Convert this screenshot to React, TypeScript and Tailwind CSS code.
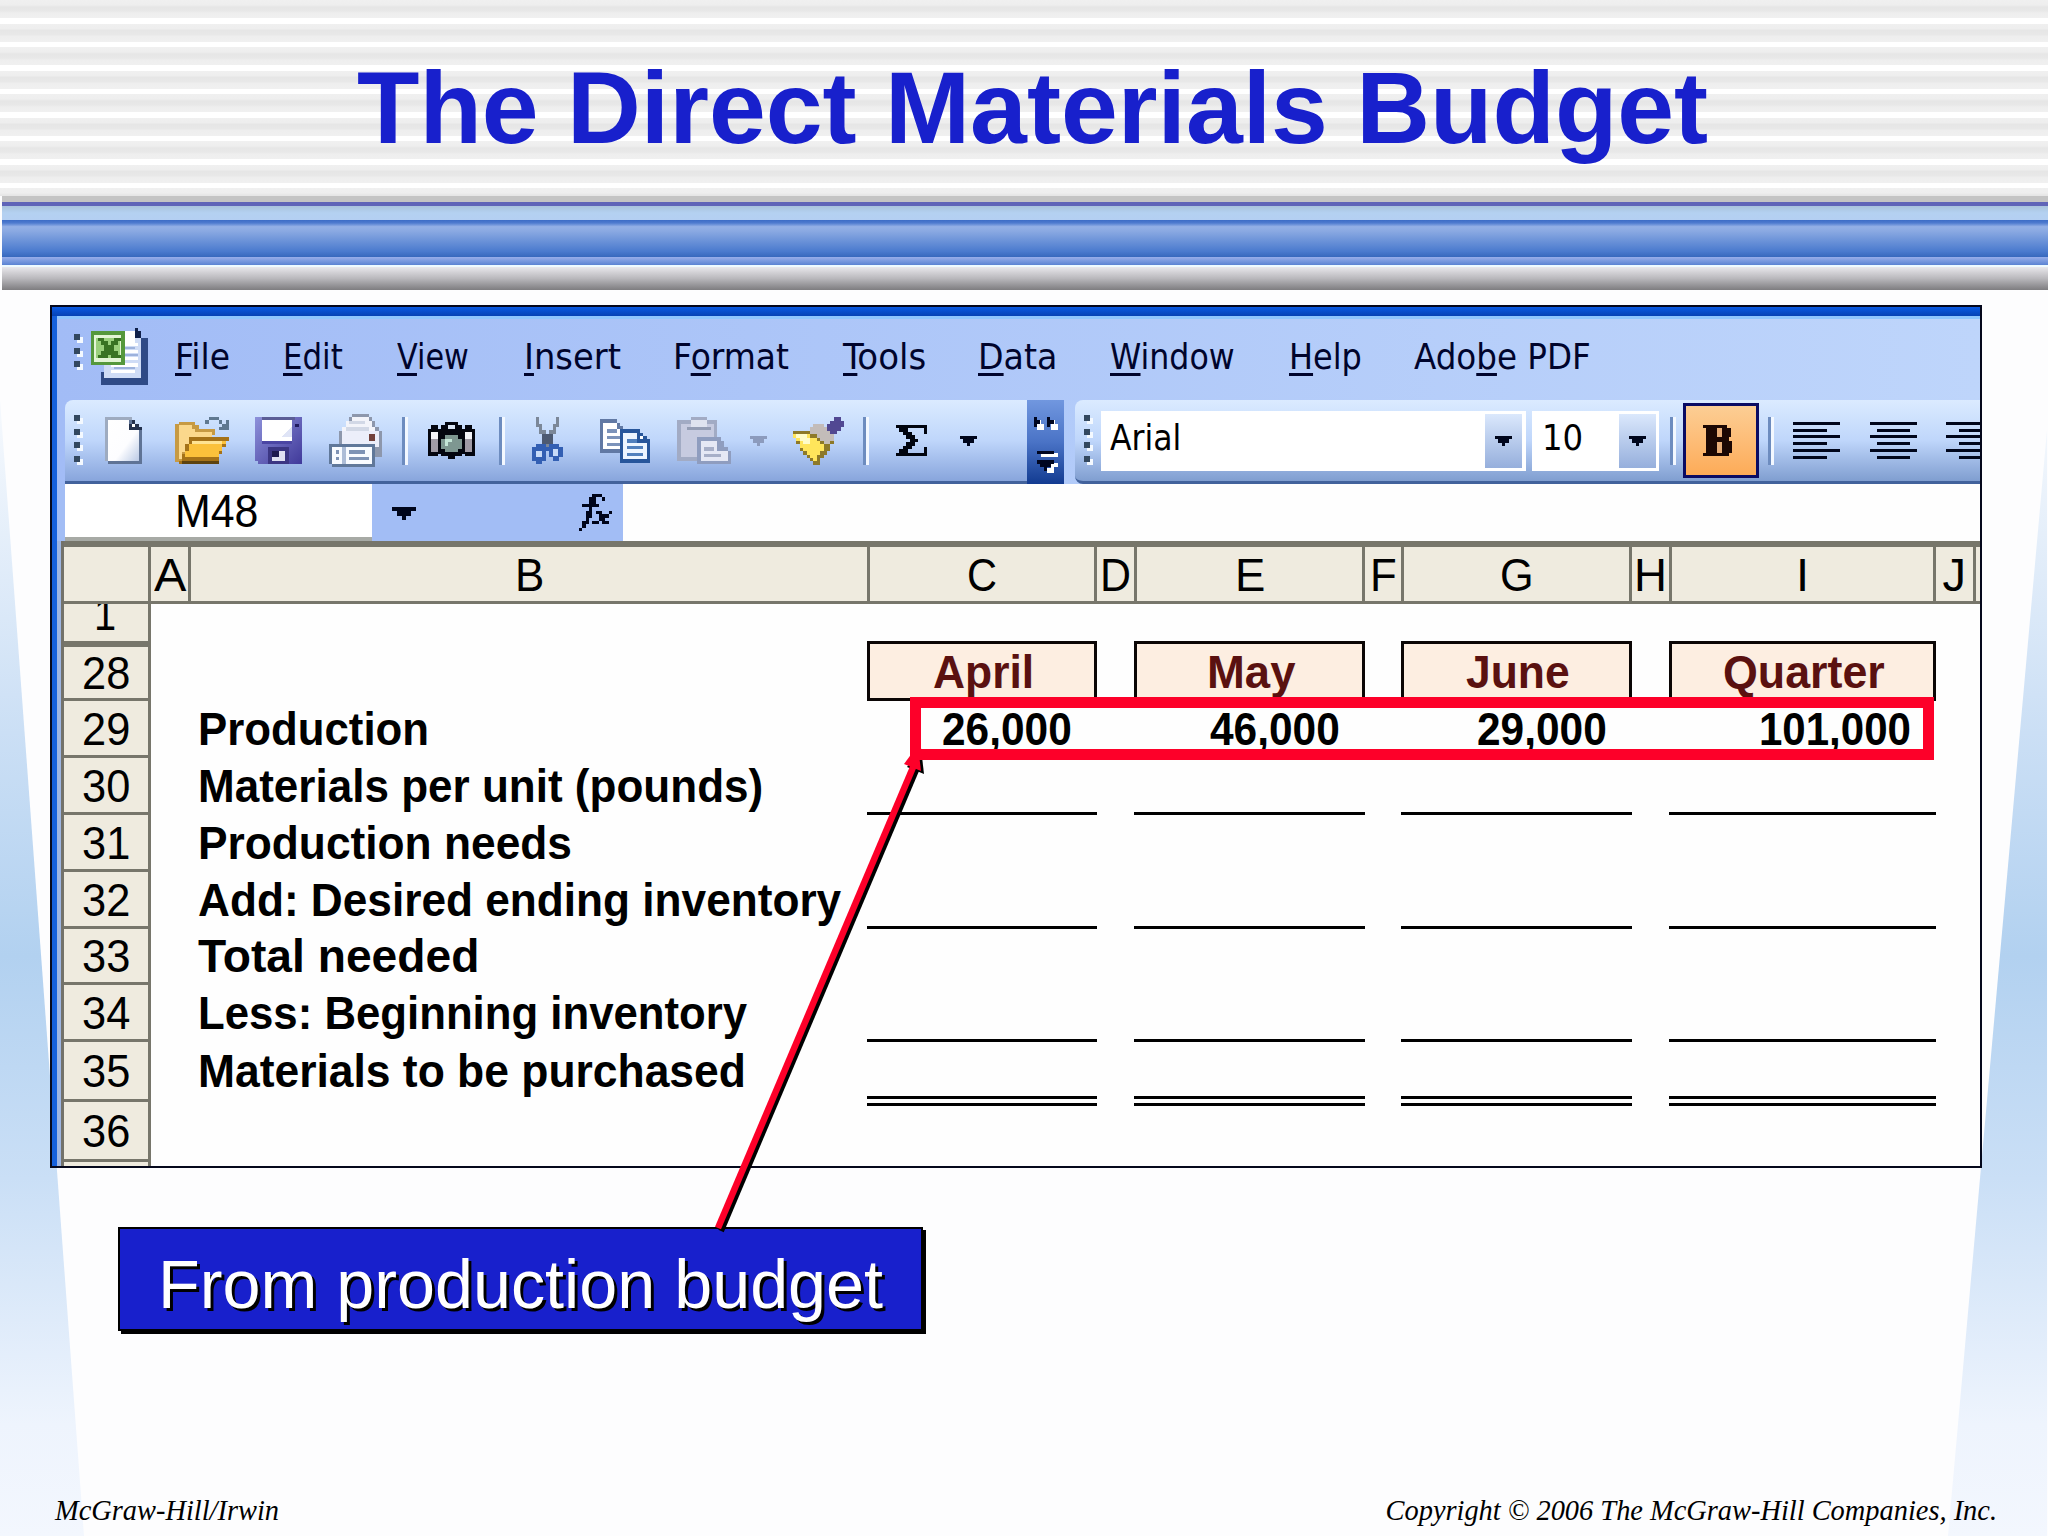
import { useLayoutEffect, useRef, useState } from 'react';
import type { ReactNode } from 'react';

interface FitTextProps {
    width: number;
    className?: string;
    children: ReactNode;
}

// Squeezes or stretches a line of text so that it fills exactly `width` pixels
function FitText({ width, className = '', children }: FitTextProps) {
    const ref = useRef<HTMLSpanElement>(null);
    const [scale, setScale] = useState(1);

    useLayoutEffect(() => {
        if (ref.current) setScale(width / ref.current.offsetWidth);
    }, [width]);

    return (
        <span className={`block shrink-0 whitespace-nowrap ${className}`} style={{ width }}>
            <span ref={ref} className="inline-block origin-left" style={{ transform: `scaleX(${scale})` }}>
                {children}
            </span>
        </span>
    );
}

interface MenuItem {
    before: string;
    key: string;
    after: string;
    width: number;
    gap: string;
}

const menu: MenuItem[] = [
    { before: '', key: 'F', after: 'ile', width: 55, gap: 'ml-[27px]' },
    { before: '', key: 'E', after: 'dit', width: 60, gap: 'ml-[53px]' },
    { before: '', key: 'V', after: 'iew', width: 72, gap: 'ml-[54px]' },
    { before: '', key: 'I', after: 'nsert', width: 97, gap: 'ml-[55px]' },
    { before: 'F', key: 'o', after: 'rmat', width: 116, gap: 'ml-[52px]' },
    { before: '', key: 'T', after: 'ools', width: 83, gap: 'ml-[54px]' },
    { before: '', key: 'D', after: 'ata', width: 79, gap: 'ml-[52px]' },
    { before: '', key: 'W', after: 'indow', width: 125, gap: 'ml-[53px]' },
    { before: '', key: 'H', after: 'elp', width: 73, gap: 'ml-[54px]' },
    { before: 'Ado', key: 'b', after: 'e PDF', width: 177, gap: 'ml-[52px]' },
];

const columns = [
    { name: 'A', size: 'w-[40px]', width: 32 },
    { name: 'B', size: 'w-[679px]', width: 29 },
    { name: 'C', size: 'w-[227px]', width: 30 },
    { name: 'D', size: 'w-[40px]', width: 31 },
    { name: 'E', size: 'w-[228px]', width: 30 },
    { name: 'F', size: 'w-[39px]', width: 27 },
    { name: 'G', size: 'w-[228px]', width: 34 },
    { name: 'H', size: 'w-[40px]', width: 33 },
    { name: 'I', size: 'w-[264px]', width: 13 },
    { name: 'J', size: 'w-[40px]', width: 24 },
];

const months = [
    { name: 'April', width: 101, size: 'w-[230px]', gap: 'mr-[37px]', value: '26,000', valueWidth: 130 },
    { name: 'May', width: 88, size: 'w-[231px]', gap: 'mr-[36px]', value: '46,000', valueWidth: 130 },
    { name: 'June', width: 104, size: 'w-[231px]', gap: 'mr-[37px]', value: '29,000', valueWidth: 130 },
    { name: 'Quarter', width: 162, size: 'w-[267px]', gap: '', value: '101,000', valueWidth: 152 },
];

interface Row {
    num: number;
    label: string;
    width: number;
    height: string;
    kind: 'head' | 'values' | 'line' | 'double' | 'blank';
}

const rows: Row[] = [
    { num: 28, label: '', width: 0, height: 'h-[54px]', kind: 'head' },
    { num: 29, label: 'Production', width: 231, height: 'h-[57px]', kind: 'values' },
    { num: 30, label: 'Materials per unit (pounds)', width: 565, height: 'h-[57px]', kind: 'line' },
    { num: 31, label: 'Production needs', width: 374, height: 'h-[57px]', kind: 'blank' },
    { num: 32, label: 'Add: Desired ending inventory', width: 643, height: 'h-[57px]', kind: 'line' },
    { num: 33, label: 'Total needed', width: 281, height: 'h-[56px]', kind: 'blank' },
    { num: 34, label: 'Less: Beginning inventory', width: 549, height: 'h-[57px]', kind: 'line' },
    { num: 35, label: 'Materials to be purchased', width: 548, height: 'h-[60px]', kind: 'double' },
    { num: 36, label: '', width: 0, height: 'h-[60px]', kind: 'blank' },
];

function Grip({ dots, className }: { dots: number; className: string }) {
    return (
        <div className={`flex shrink-0 flex-col gap-[7.5px] ${className}`}>
            {[...Array(dots)].map((_, i) => (
                <div key={i} className="h-[6px] w-[6px] bg-[#33485f] shadow-[3px_3px_0_#f4f9ff]" />
            ))}
        </div>
    );
}

function Separator({ className }: { className: string }) {
    return <div className={`h-[48px] w-[6px] shrink-0 border-l-[3px] border-r-[3px] border-l-[#6d8cbf] border-r-[#f3f8ff] ${className}`} />;
}

function Arrow({ className, color = '#00061c' }: { className: string; color?: string }) {
    return (
        <svg className={`shrink-0 ${className}`} viewBox="0 0 5 3" preserveAspectRatio="none" shapeRendering="crispEdges">
            <path d="M0 0h5v1h-1v1h-1v1h-1v-1h-1v-1h-1z" fill={color} />
        </svg>
    );
}

function ExcelIcon() {
    return (
        <svg className="ml-[11px] h-[57px] w-[57px] shrink-0" viewBox="0 0 17 17" shapeRendering="crispEdges">
            <path d="M5 3h12v14H3v-4h2z" fill="#2f4a86" />
            <path d="M6 1h7v1h1v1h1v12H4V7z" fill="#cfdcf6" />
            <path d="M10 1h3v4h-3z" fill="#fff" />
            <path d="M13 0h1v1h1v2h-2z" fill="#10204a" />
            <path d="M10 5h4M10 7h4M10 9h4M6 11h8M6 13h7" stroke="#fff" />
            <path d="M10 6h3M10 8h4M7 12h6" stroke="#9db2dc" strokeWidth=".7" />
            <path d="M0 1h10v10H0z" fill="#55983c" />
            <path d="M1 2h8v8H1z" fill="#e3f5d6" />
            <path d="M1.5 3h7v6h-7z" fill="#9ad07c" />
            <path d="M2 3h2v1h1v1h1V4h1V3h2v1H8v1H7v2h1v1h1v1H6V8H5v1H2V8h1V7h1V5H3V4H2z" fill="#397323" />
        </svg>
    );
}

function NewIcon() {
    return (
        <svg className="ml-[23px] h-[47px] w-[37px] shrink-0" viewBox="0 0 11 14" shapeRendering="crispEdges">
            <defs>
                <linearGradient id="paper" x1="0" y1="0" x2="1" y2="1">
                    <stop offset="0" stopColor="#fff" />
                    <stop offset=".6" stopColor="#fdfdff" />
                    <stop offset="1" stopColor="#bccbe6" />
                </linearGradient>
            </defs>
            <path d="M0 0h8v1h1v1h1v1h1v11H1v-1H0z" fill="#5f7395" />
            <path d="M0 0h1v13H0zM0 0h8v1H0z" fill="#9eabc0" />
            <path d="M1 1h6v3h3v9H1z" fill="url(#paper)" />
            <path d="M8 1h1v1h1v1h1v1H7V2h1z" fill="#23304c" />
            <path d="M8 2h1v1H8z" fill="#fff" />
        </svg>
    );
}

function OpenIcon() {
    return (
        <svg className="ml-[33px] h-[47px] w-[54px] shrink-0" viewBox="0 0 16 14" shapeRendering="crispEdges">
            <path d="M0 2h1v-.5h5v1h1v1h5v2H5v2H4v2H3v2H2v2H0z" fill="#c79a43" />
            <path d="M1 2.5h4v1h1v1h5v2H4v2H3v2H2v2H1z" fill="#fbd88c" />
            <path d="M4 6h12v1h-1v2h-1v2h-1v3H1v-1h1v-2h1V8h1z" fill="#a57218" />
            <path d="M5 7h10v1h-1v2h-1v2H3v-2h1V8h1z" fill="#fbc13b" />
            <path d="M5 7h9v1H5z" fill="#ffe391" />
            <path d="M2 13h11v1H2z" fill="#5d430f" />
            <path d="M9 1h1V0h3v1h1v1h1V1h1v3h-3V3h1V2h-1V1h-3v1H9z" fill="#5f7890" />
        </svg>
    );
}

function SaveIcon() {
    return (
        <svg className="ml-[26px] h-[47px] w-[47px] shrink-0" viewBox="0 0 14 14" shapeRendering="crispEdges">
            <defs>
                <linearGradient id="disk" x1="0" y1="0" x2="1" y2="1">
                    <stop offset="0" stopColor="#8d91da" />
                    <stop offset="1" stopColor="#40399a" />
                </linearGradient>
            </defs>
            <path d="M0 0h14v14H1v-1H0z" fill="url(#disk)" />
            <path d="M2 0h10v1H2z" fill="#5a5d96" />
            <path d="M2 1h9v6H2z" fill="#fff" />
            <path d="M5 6h6V3l-3 3z" fill="#dfe4f6" />
            <path d="M2 7h9v1H2z" fill="#4b46a4" />
            <path d="M12 2h1v1h-1z" fill="#201b60" />
            <path d="M4 9h6v5H4z" fill="#3b3683" />
            <path d="M5 10h4v3H5z" fill="#dfe0f2" />
            <path d="M5 10h2v2H5z" fill="#1d194f" />
        </svg>
    );
}

function PrintIcon() {
    return (
        <svg className="ml-[27px] h-[53px] w-[53px] shrink-0" viewBox="0 0 16 16" shapeRendering="crispEdges">
            <path d="M7 0h5v1h1v1h1v2h1v1h1v8h-2v-3H3V5h1V4h1V2h1V1h1z" fill="#8d97ac" />
            <path d="M7 1h5v1h1v2h1v1H4V4h1V2h2z" fill="#f3f4fa" />
            <path d="M6 2h5v1H6zM5 4h7v1H5z" fill="#d2d8e6" />
            <path d="M4 5h11v5H4z" fill="#eceefa" />
            <path d="M12 6h2v2h-2z" fill="#73413c" />
            <path d="M0 9h14v7H1v-1H0z" fill="#60789a" />
            <path d="M1 10h12v5H1z" fill="#f8fbff" />
            <path d="M2 11h1v1H2zM2 13h1v1H2zM6 11h5v1H6zM6 13h6v1H6z" fill="#7e93b5" />
            <path d="M4 10h1v5H4z" fill="#adbdd7" />
        </svg>
    );
}

function CameraIcon() {
    return (
        <svg className="ml-[20px] h-[37px] w-[47px] shrink-0" viewBox="0 0 14 11" shapeRendering="crispEdges">
            <path d="M5 0h4v1h1v1h1V1h2v1h1v8h-3v-.5h-1v.5H8v1H6v-1H4v-.5H3v.5H0V2h1V1h2v1h1V1h1z" fill="#04060f" />
            <path d="M6 1h2v1H6z" fill="#dbe6f5" />
            <path d="M1 3h2v2H1zM11 3h2v2h-2z" fill="#f4f4f8" />
            <path d="M1 5h2v4H1zM11 5h2v4h-2z" fill="#a09ba6" />
            <path d="M5 4h4v1h1v3H9v1H5V8H4V5h1z" fill="#7e9791" />
            <path d="M5 5h2v1H6v1H5z" fill="#c4e5d7" />
        </svg>
    );
}

function CutIcon() {
    return (
        <svg className="ml-[27px] h-[47px] w-[31px] shrink-0" viewBox="0 0 9 14" shapeRendering="crispEdges">
            <path d="M1 0h1v2h1v2h1v2h1V4h1V2h1V0h1v3H7v2H6v2H5v2H4V7H3V5H2V3H1z" fill="#7b8798" />
            <path d="M3 5h3v3H3z" fill="#4d5a72" />
            <path d="M1 8h3v1h1V8h3v1h1v3H8v1H6v-1H5v-2H4v3H3v1H1v-1H0V9h1z" fill="#335fb3" />
            <path d="M1 10h2v2H1zM6 9.500h1.500v2H6z" fill="#c8dbf8" />
        </svg>
    );
}

function CopyIcon() {
    return (
        <svg className="ml-[37px] h-[44px] w-[50px] shrink-0" viewBox="0 0 15 13" shapeRendering="crispEdges">
            <path d="M0 0h5v1h1v1h1v1h1v7H0z" fill="#6179a4" />
            <path d="M1 1h4v2h2v6H1z" fill="#fff" />
            <path d="M2 3h3v1H2zM2 5h4v1H2zM2 7h4v1H2z" fill="#7c93ba" />
            <path d="M6 3h6v1h1v1h1v1h1v7H6z" fill="#27569b" />
            <path d="M7 4h4v3h3v5H7z" fill="#edf5ff" />
            <path d="M8 6h3v1H8zM8 8h5v1H8zM8 10h5v1H8z" fill="#5180bd" />
            <path d="M12 5h1v1h-1z" fill="#fff" />
        </svg>
    );
}

function PasteIcon() {
    return (
        <svg className="ml-[27px] h-[47px] w-[54px] shrink-0" viewBox="0 0 16 14" shapeRendering="crispEdges">
            <path d="M0 1h4V0h5v1h3v6H6v6H0z" fill="#a2abc4" />
            <path d="M1 2h10v5H6v5H1z" fill="#c7cbe0" />
            <path d="M4 1h5v2H4z" fill="#dfe3ef" />
            <path d="M3 3h7v1H3z" fill="#949db4" />
            <path d="M6 6h7v1h1v2h1v1h1v4H6z" fill="#8f9dbf" />
            <path d="M7 7h5v3h3v3H7z" fill="#e5e8f5" />
            <path d="M8 9h3v1H8zM8 11h5v1H8z" fill="#a7afc8" />
        </svg>
    );
}

function BrushIcon() {
    return (
        <svg className="ml-[26px] h-[48px] w-[51px] shrink-0" viewBox="0 0 15 14" shapeRendering="crispEdges">
            <path d="M12 0h2v1h1v2h-1v1h-1v1h-2V4h-1V2h1V1h1z" fill="#514892" />
            <path d="M6 2h3v1h1v1h1v1h1v2h-1v1H9V7H8V6H6V5H4V4h1V3h1z" fill="#c3bcb9" />
            <path d="M0 4h5v1h2v1h1v1h1v1h2V7h1v1h-1v2h-1v1H9v1H8v2H6v-1H5v-1H4v-1H3v-1H2V8H1V6H0z" fill="#8d7929" />
            <path d="M0 5h5v1h2v1h1v1h1v2H8v1H7v2H6v-1H5v-1H4v-1H3V9H2V7H1V6H0z" fill="#ffe55b" />
            <path d="M1 5h3v1h1v2H3V7H2V6H1z" fill="#fffcc9" />
        </svg>
    );
}

function SigmaIcon() {
    return (
        <svg className="ml-[27px] h-[31px] w-[31px] shrink-0" viewBox="0 0 9 9" preserveAspectRatio="none" shapeRendering="crispEdges">
            <path d="M0 0h9v2.500H8V1H3.500v1H4.500v1h1v1h1v1h-1v1h-1v1h-1v1H8V6.500h1V9H0V8h1V7h1V6h1V5h1V4H3V3H2V2H1V1H0z" fill="#00040f" />
        </svg>
    );
}

function BoldIcon() {
    return (
        <svg className="-ml-[6px] h-[31px] w-[31px]" viewBox="0 0 9 9" preserveAspectRatio="none" shapeRendering="crispEdges">
            <path d="M0 0h7v1h1v2.500H7.500v1H8.500V8H7.500v1H0V8h1V1H0z" fill="#1c0703" />
            <path d="M4 1h1.500v2.500H4zM4 5h1.500v3H4z" fill="#e8ad78" />
        </svg>
    );
}

function AlignIcon({ short, className }: { short: number; className: string }) {
    return (
        <svg className={`h-[37px] w-[47px] shrink-0 ${className}`} viewBox="0 0 14 11" shapeRendering="crispEdges">
            {[0, 4, 8].map((y) => (
                <g key={y} fill="#00061c">
                    <path d={`M0 ${y}h14v.9H0z`} />
                    <path d={`M${short} ${y + 2}h10v.9h-10z`} />
                </g>
            ))}
        </svg>
    );
}

function MenuBar() {
    return (
        <div className="flex h-[84px] items-center border-t-[3px] border-[#8fc6fd] bg-linear-to-r from-[#a2bcf6] to-[#bed5fb] pb-[6px] font-['DejaVu_Sans_Condensed','DejaVu_Sans',sans-serif] text-[36px] leading-none text-[#00042c]">
            <Grip dots={3} className="-mt-[12px] ml-[17px]" />
            <ExcelIcon />
            {menu.map((item) => (
                <FitText key={item.key + item.after} width={item.width} className={item.gap}>
                    {item.before}
                    <span className="underline decoration-[3px] underline-offset-[4px] [text-decoration-skip-ink:none]">{item.key}</span>
                    {item.after}
                </FitText>
            ))}
        </div>
    );
}

function ToolBars() {
    return (
        <div className="flex h-[84px] bg-linear-to-r from-[#a2bcf6] to-[#c0d8fc] pl-[8px]">
            {/* Standard toolbar */}
            <div className="flex h-[84px] w-[962px] shrink-0 items-center rounded-tl-lg border-b-[3px] border-[#42629c] bg-linear-to-b from-[#dbebff] via-[#bfd6fb] to-[#88a5dc]">
                <Grip dots={4} className="-mt-[4px] ml-[9px] w-[8px]" />
                <NewIcon />
                <OpenIcon />
                <SaveIcon />
                <PrintIcon />
                <Separator className="ml-[20px]" />
                <CameraIcon />
                <Separator className="ml-[24px]" />
                <CutIcon />
                <CopyIcon />
                <PasteIcon />
                <Arrow className="ml-[19px] h-[10px] w-[17px]" color="#8c9bbd" />
                <BrushIcon />
                <Separator className="ml-[19px]" />
                <SigmaIcon />
                <Arrow className="ml-[33px] h-[10px] w-[17px]" />
            </div>
            <div className="h-[84px] w-[37px] shrink-0 bg-linear-to-b from-[#7197df] via-[#4a73c6] to-[#123b91]">
                <svg className="h-[84px] w-[37px]" viewBox="0 0 37 84" shapeRendering="crispEdges">
                    <path d="M10 20h4v4h3v6h-7zM24 20h4v4h3v6h-7z" fill="#fff" />
                    <path d="M7 17h3v3h3v4h-3v3H7zM20 17h3v3h4v4h-4v3h-3z" fill="#000620" />
                    <path d="M14 53h17v4H14zM24 63h7v4h-4v6h-7v-5h4z" fill="#fff" />
                    <path d="M10 51h17v3H10zM10 60h17v4h-3v3h-4v4h-3v-4h-4v-3h-3z" fill="#000620" />
                </svg>
            </div>

            {/* Formatting toolbar */}
            <div className="ml-[11px] flex h-[84px] w-[905px] shrink-0 items-center overflow-hidden rounded-l-lg border-b-[3px] border-[#42629c] bg-linear-to-b from-[#dbebff] via-[#bfd6fb] to-[#809ed0]">
                <Grip dots={4} className="-mt-[4px] ml-[9px] w-[8px]" />
                <div className="ml-[9px] flex h-[60px] w-[425px] shrink-0 items-center justify-between bg-white pr-1 pl-[9px] font-['DejaVu_Sans_Condensed','DejaVu_Sans',sans-serif] text-[36px] leading-none">
                    <FitText width={71} className="pb-[6px]">Arial</FitText>
                    <div className="flex h-[54px] w-[37px] items-center justify-center bg-linear-to-b from-[#dbe8fc] to-[#96afdc]">
                        <Arrow className="h-[10px] w-[17px]" />
                    </div>
                </div>
                <div className="ml-[6px] flex h-[60px] w-[127px] shrink-0 items-center justify-between bg-white pr-[3px] pl-[10px] font-['DejaVu_Sans_Condensed','DejaVu_Sans',sans-serif] text-[36px] leading-none">
                    <FitText width={41} className="pb-[6px]">10</FitText>
                    <div className="flex h-[54px] w-[37px] items-center justify-center bg-linear-to-b from-[#dbe8fc] to-[#96afdc]">
                        <Arrow className="h-[10px] w-[17px]" />
                    </div>
                </div>
                <Separator className="ml-[11px]" />
                <div className="ml-[7px] flex h-[75px] w-[76px] shrink-0 items-center justify-center border-[3px] border-[#0a0b63] bg-linear-to-b from-[#fcce94] to-[#fdab57]">
                    <BoldIcon />
                </div>
                <Separator className="ml-[9px]" />
                <AlignIcon short={0} className="ml-[19px]" />
                <AlignIcon short={2} className="ml-[30px]" />
                <AlignIcon short={4} className="ml-[29px]" />
            </div>
        </div>
    );
}

function FormulaBar() {
    return (
        <div className="flex h-[57px] bg-[#a2bdf5] pl-[8px]">
            <div className="h-[57px] w-[307px] border-b-[4px] border-[#a7aaa5] bg-white pl-[110px] text-[47px] leading-[53px]">
                <FitText width={83}>M48</FitText>
            </div>
            <Arrow className="mt-[23px] ml-[20px] h-[13px] w-[24px]" />
            <svg className="mt-[10px] ml-[163px] h-[37px] w-[33px]" viewBox="0 0 10 11" preserveAspectRatio="none" shapeRendering="crispEdges">
                <g fill="#00051a">
                    <path d="M4 0h3v1H4zM3 1h2v2H3zM7 1h1v1H7zM1 3h5v1H1zM3 4h1v1H3zM2 5h2v2H2zM2 7h1v1H2zM1 8h2v1H1zM1 9h1v1H1zM0 10h1v1H0z" />
                    <path d="M5 5h2v1H5zM9 5h1v1H9zM6 6h3v1H6zM6 7h2v1H6zM4 8h2v1H4zM7 8h2v1H7z" />
                </g>
            </svg>
            <div className="ml-[11px] flex-1 bg-[#fefefe]" />
        </div>
    );
}

function RowCells({ kind }: { kind: Row['kind'] }) {
    if (kind === 'blank') return null;
    return (
        <div className="flex items-end">
            {months.map((month) => {
                if (kind === 'head') {
                    return (
                        <div
                            key={month.name}
                            className={`-mt-[6px] flex h-[60px] items-center justify-center border-[3px] border-[#0b0605] bg-[#fdeee1] pt-[1px] pl-[2px] text-[#5a1110] ${month.size} ${month.gap}`}
                        >
                            <FitText width={month.width}>{month.name}</FitText>
                        </div>
                    );
                }
                if (kind === 'values') {
                    return (
                        <div key={month.name} className={`flex h-[54px] items-center justify-end self-start pr-[25px] ${month.size} ${month.gap}`}>
                            <FitText width={month.valueWidth}>{month.value}</FitText>
                        </div>
                    );
                }
                if (kind === 'double') {
                    return <div key={month.name} className={`-mb-[4px] h-[10px] border-y-[3px] border-black ${month.size} ${month.gap}`} />;
                }
                return <div key={month.name} className={`h-[3px] bg-black ${month.size} ${month.gap}`} />;
            })}
        </div>
    );
}

function Sheet() {
    return (
        <div className="ml-[4px] border-l-[3px] border-[#73726a] text-[47px] leading-none text-black">
            {/* Column letters */}
            <div className="flex h-[63px] border-t-[6px] border-b-[3px] border-[#77766b] bg-[#efebdf]">
                <div className="w-[87px] shrink-0 border-r-[3px] border-[#77766b]" />
                {columns.map((col) => (
                    <div key={col.name} className={`flex shrink-0 items-center justify-center border-r-[3px] border-[#77766b] ${col.size}`}>
                        <FitText width={col.width}>{col.name}</FitText>
                    </div>
                ))}
            </div>

            {/* Cut-off first row above the frozen pane line */}
            <div className="h-[43px] w-[87px] overflow-hidden border-r-[3px] border-b-[6px] border-[#77766b] bg-[#efebdf] pl-[30px]">
                <FitText width={22} className="-mt-[14px]">1</FitText>
            </div>

            {rows.map((row) => (
                <div key={row.num} className={`flex font-bold ${row.height}`}>
                    <div className="flex w-[87px] shrink-0 items-center justify-center border-r-[3px] border-b-[3px] border-[#77766b] bg-[#efebdf] font-normal">
                        <FitText width={48}>{row.num}</FitText>
                    </div>
                    <div className="flex w-[716px] shrink-0 items-center pb-[3px] pl-[47px]">
                        {row.label && <FitText width={row.width}>{row.label}</FitText>}
                    </div>
                    <RowCells kind={row.kind} />
                </div>
            ))}
            <div className="h-[10px] w-[87px] border-r-[3px] border-[#77766b] bg-[#efebdf]" />
        </div>
    );
}

export default function App() {
    return (
        <div className="relative h-[1536px] w-[2048px] overflow-hidden bg-[#fdfdfe] font-['Liberation_Sans',Arial,sans-serif]">
            {/* Side wedges of the slide background */}
            <svg className="absolute inset-0 h-full w-full" viewBox="0 0 2048 1536">
                <defs>
                    <linearGradient id="wedge" gradientUnits="userSpaceOnUse" x1="0" y1="420" x2="0" y2="1536">
                        <stop offset="0" stopColor="#f4f8fd" />
                        <stop offset=".28" stopColor="#cbdff5" />
                        <stop offset=".48" stopColor="#b2d1f0" />
                        <stop offset=".68" stopColor="#cadff6" />
                        <stop offset=".9" stopColor="#eef4fd" />
                        <stop offset="1" stopColor="#f3f7fe" />
                    </linearGradient>
                </defs>
                <path d="M0 400L84 1536H0z" fill="url(#wedge)" />
                <path d="M2047 430L1948 1536H2047z" fill="url(#wedge)" />
            </svg>

            <header className="relative">
                <div className="flex h-[196px] items-center justify-center bg-[repeating-linear-gradient(180deg,#f0f0f0_0px,#eeeeee_5px,#e6e6e6_7px,#e8e8e8_11px,#eeeeee_13px,#f0f0f0_18px,#ffffff_18px,#ffffff_23.500px)] pt-[21px] pl-[17px]">
                    <h1 className="text-[102.4px] leading-none font-bold whitespace-nowrap text-[#1820cc]">
                        <FitText width={1351}>The Direct Materials Budget</FitText>
                    </h1>
                </div>
                <div className="pl-[2px]">
                    <div className="h-[6px] bg-[#c4c4c4]" />
                    <div className="h-[4px] bg-[#5f64b8]" />
                    <div className="h-[14px] bg-linear-to-b from-[#a9c3dd] via-[#b4d1f1] to-[#b4cff2]" />
                    <div className="h-[37px] bg-[linear-gradient(180deg,#3c6cc6_0%,#4f7bcf_8%,#94b0e6_18%,#8aa9e2_30%,#4a7ace_85%,#3768bd_100%)]" />
                    <div className="h-[8px] bg-linear-to-b from-[#98aeea] to-[#5a83d2]" />
                    <div className="h-[2px] bg-[#eefaff]" />
                    <div className="h-[23px] bg-linear-to-b from-[#e9e8ec] via-[#b9b8bc] to-[#7e7d80]" />
                </div>
            </header>

            {/* Spreadsheet window */}
            <div className="relative mt-[15px] ml-[50px] h-[863px] w-[1932px] overflow-hidden border-2 border-[#05081c] bg-[#fefefe]">
                <div className="h-[9px] bg-linear-to-b from-[#0b5be4] to-[#0642b4]" />
                <div className="flex">
                    <div className="h-[850px] w-[5px] shrink-0 bg-[#1560dc]" />
                    <div className="w-[1923px] shrink-0 overflow-hidden">
                        <MenuBar />
                        <ToolBars />
                        <FormulaBar />
                        <div className="bg-linear-to-r from-[#9fb6e2] from-[4px] to-transparent to-[4px]">
                            <Sheet />
                        </div>
                    </div>
                </div>
            </div>

            {/* Callout and arrow to the highlighted row */}
            <div className="relative mt-[59px] ml-[118px] flex h-[104px] w-[805px] items-center justify-center border-2 border-black bg-[#1820cc] pt-[10px] shadow-[3px_3px_0_#000]">
                <span className="text-[68.3px] leading-none whitespace-nowrap text-white [text-shadow:3px_3px_0_#000]">From production budget</span>
            </div>
            <svg className="absolute inset-0 h-full w-full" viewBox="0 0 2048 1536">
                <path d="M721 1231L917 768" stroke="#000" strokeWidth="6" />
                <path d="M907 767L921 748L924 774z" fill="#000" />
                <path d="M718 1228L914 765" stroke="#fd0029" strokeWidth="6.500" />
                <path d="M904 764L918 745L921 771z" fill="#fd0029" />
            </svg>
            <div className="absolute top-[697px] left-[910px] h-[63px] w-[1024px] border-[11px] border-[#fd0029]" />

            <footer className="relative mt-[164px] flex justify-between pr-[51px] pl-[55px] font-['Liberation_Serif',serif] text-[28.400px] leading-[32px] text-black italic">
                <span>McGraw-Hill/Irwin</span>
                <span>Copyright © 2006 The McGraw-Hill Companies, Inc.</span>
            </footer>
        </div>
    );
}
